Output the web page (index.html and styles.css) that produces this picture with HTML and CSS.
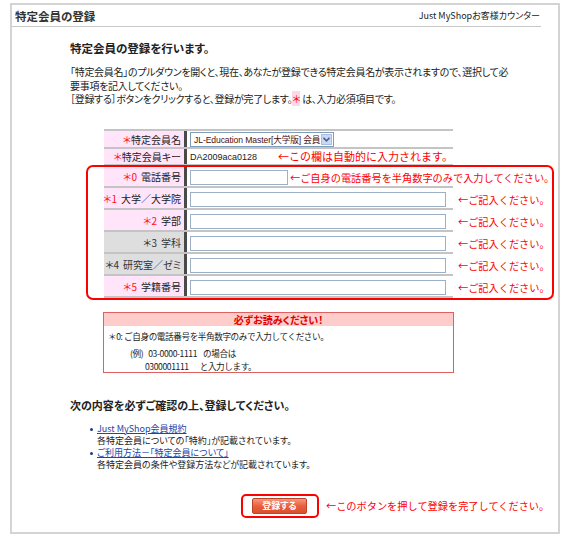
FILE: index.html
```html
<!DOCTYPE html>
<html lang="ja">
<head>
<meta charset="utf-8">
<title>特定会員の登録</title>
<link rel="stylesheet" href="styles.css">
</head>
<body>
<div class="frame">
  <div class="header">
    <h1 class="title">特定会員の登録</h1>
    <span class="counter">Just MyShopお客様カウンター</span>
  </div>
  <div class="content">
    <h2 class="lead">特定会員の登録を行います。</h2>
    <p class="intro">「特定会員名」のプルダウンを開くと、現在、あなたが登録できる特定会員名が表示されますので、選択して必<br>要事項を記入してください。<br>［登録する］ボタンをクリックすると、登録が完了します。<span class="req-mark">＊</span> は、入力必須項目です。</p>

    <div class="tablewrap">
      <div class="ftable">
        <div class="frow r1">
          <div class="lab"><span><span class="red">＊</span>特定会員名</span></div>
          <div class="val">
            <div class="select"><span class="seltext">JL-Education Master[大学版] 会員</span><span class="arrow"><svg width="7" height="5" viewBox="0 0 7 5"><path d="M0.5 0.8 L3.5 3.8 L6.5 0.8" fill="none" stroke="#4d6185" stroke-width="1.6"/></svg></span></div>
          </div>
        </div>
        <div class="frow r2">
          <div class="lab"><span><span class="red">＊</span>特定会員キー</span></div>
          <div class="val"><span class="key">DA2009aca0128</span><span class="note note-lg">←この欄は自動的に入力されます。</span></div>
        </div>
        <div class="frow rn">
          <div class="lab"><span><span class="red num-mark">＊0</span>電話番号</span></div>
          <div class="val"><input class="inp inp-s" type="text"><span class="note note-tel">←ご自身の電話番号を半角数字のみで入力してください。</span></div>
        </div>
        <div class="frow rn">
          <div class="lab"><span><span class="red num-mark">＊1</span>大学／大学院</span></div>
          <div class="val"><input class="inp" type="text"><span class="note">←ご記入ください。</span></div>
        </div>
        <div class="frow rn">
          <div class="lab"><span><span class="red num-mark">＊2</span>学部</span></div>
          <div class="val"><input class="inp" type="text"><span class="note">←ご記入ください。</span></div>
        </div>
        <div class="frow rn">
          <div class="lab gray"><span><span class="num-mark">＊3</span>学科</span></div>
          <div class="val"><input class="inp" type="text"><span class="note">←ご記入ください。</span></div>
        </div>
        <div class="frow rn">
          <div class="lab gray"><span><span class="num-mark">＊4</span>研究室／ゼミ</span></div>
          <div class="val"><input class="inp" type="text"><span class="note">←ご記入ください。</span></div>
        </div>
        <div class="frow rn">
          <div class="lab"><span><span class="red num-mark">＊5</span>学籍番号</span></div>
          <div class="val"><input class="inp" type="text"><span class="note">←ご記入ください。</span></div>
        </div>
      </div>
      <div class="redbox"></div>
    </div>

    <div class="notice">
      <div class="notice-head">必ずお読みください！</div>
      <div class="notice-body">
        <div class="nline">＊0: ご自身の電話番号を半角数字のみで入力してください。</div>
        <div class="nline ex1"><span class="exl">(例)</span><span class="num">03-0000-1111</span><span>の場合は</span></div>
        <div class="nline ex2"><span class="num2">0300001111</span><span>と入力します。</span></div>
      </div>
    </div>

    <h3 class="confirm">次の内容を必ずご確認の上、登録してください。</h3>
    <ul class="links">
      <li><a href="#">Just MyShop会員規約</a><br>各特定会員についての「特約」が記載されています。</li>
      <li><a href="#">ご利用方法－「特定会員について」</a><br>各特定会員の条件や登録方法などが記載されています。</li>
    </ul>

    <div class="submit-row">
      <div class="btnframe"><button class="btn" type="button">登録する</button></div>
      <span class="btn-note">←このボタンを押して登録を完了してください。</span>
    </div>
  </div>
</div>
</body>
</html>
```
FILE: styles.css
```css
html, body {
  margin: 0;
  padding: 0;
  background: #fff;
}
body {
  font-family: "Noto Sans CJK JP", "Noto Sans", sans-serif;
  font-size: 10px;
  color: #222;
}
.frame {
  margin: 3px 0 0 10px;
  width: 546px;
  height: 527px;
  border: 2px solid #d4d4d4;
}
.header {
  width: 526px;
  height: 21px;
  padding-left: 3px;
  border-bottom: 1px solid #c8c8c8;
  display: flex;
  align-items: center;
  justify-content: space-between;
}
.title {
  margin: 0;
  font-size: 11.5px;
  font-weight: bold;
  color: #333;
  font-feature-settings: "palt";
  line-height: 16px;
}
.counter {
  font-size: 9px;
  color: #222;
  font-feature-settings: "palt";
  padding-right: 1px;
}
.content {
  padding-left: 58px;
}
.lead {
  margin: 13px 0 0 0;
  font-size: 11.5px;
  line-height: 16px;
  font-weight: bold;
  font-feature-settings: "palt";
}
.intro {
  margin: 9px 0 0 0;
  font-size: 10px;
  line-height: 13.5px;
  font-feature-settings: "palt";
  letter-spacing: -0.3px;
  white-space: nowrap;
}
.req-mark {
  color: #ff0000;
  background: #ffd8e8;
}
.tablewrap {
  position: relative;
  margin: 23.5px 0 0 34px;
  width: 349px;
}
.ftable {
  width: 349px;
  border-top: 2px solid #c4c4c4;
}
.frow {
  display: flex;
  border-bottom: 2px solid #c4c4c4;
}
.r1 { height: 16px; }
.r2 { height: 15px; }
.rn { height: 20px; }
.lab {
  width: 77px;
  padding-right: 3px;
  background: #ffe4fa;
  border-right: 3px solid #4a4a4a;
  display: flex;
  align-items: center;
  justify-content: flex-end;
  font-size: 10px;
  white-space: nowrap;
  font-feature-settings: "palt";
  color: #222;
}
.lab.gray {
  background: #dedede;
  color: #333;
}
.red { color: #ff1010; }
.num-mark {
  margin-right: 4px;
}
.val {
  width: 263px;
  padding-left: 3px;
  display: flex;
  align-items: center;
  white-space: nowrap;
}
.rn .val {
  align-items: flex-end;
  padding-bottom: 1px;
  box-sizing: border-box;
  height: 20px;
}
.select {
  width: 144px;
  height: 15px;
  box-sizing: border-box;
  border: 1px solid #7f9db9;
  display: flex;
  align-items: center;
  justify-content: space-between;
  background: #fff;
}
.seltext {
  font-family: "Liberation Sans", "Noto Sans CJK JP", sans-serif;
  font-size: 8.6px;
  color: #4a1010;
  padding-left: 3px;
  letter-spacing: -0.1px;
}
.arrow {
  width: 11px;
  height: 11px;
  margin-right: 1px;
  background: #c9d8f5;
  border: 1px solid #a8bde6;
  box-sizing: border-box;
  display: flex;
  align-items: center;
  justify-content: center;
}
.key {
  display: inline-block;
  width: 93px;
  font-family: "Liberation Sans", sans-serif;
  font-size: 9px;
  color: #222;
}
.note {
  color: #ff0000;
  font-size: 10.2px;
  line-height: 15px;
  margin-left: 12px;
}
.note-lg {
  font-size: 11px;
  margin-left: 0;
}
.note-tel {
  margin-left: 2px;
}
.inp {
  width: 256px;
  height: 15px;
  box-sizing: border-box;
  margin: 0;
  padding: 0;
  border: 1px solid #9cb0c6;
  background: #fff;
  flex: none;
}
.inp-s {
  width: 98px;
}
.redbox {
  position: absolute;
  left: -18px;
  top: 36px;
  width: 468px;
  height: 135px;
  box-sizing: border-box;
  border: 2px solid #ff0000;
  border-radius: 7px;
  pointer-events: none;
}
.notice {
  margin: 14px 0 0 33px;
  width: 349px;
  border: 1px solid #e06060;
}
.notice-head {
  height: 13px;
  line-height: 13px;
  background: #ffcccc;
  color: #e00000;
  font-weight: bold;
  text-align: center;
  font-size: 10px;
  font-feature-settings: "palt";
}
.notice-body {
  padding: 5px 0 0 4px;
  font-size: 8.6px;
  letter-spacing: -0.4px;
  color: #222;
}
.nline {
  line-height: 11px;
  white-space: nowrap;
}
.ex1 {
  margin-top: 6px;
  padding-left: 22px;
}
.ex2 {
  margin-top: 1.5px;
  padding-left: 37px;
}
.exl {
  margin-right: 5px;
}
.num {
  margin-right: 6px;
}
.num2 {
  margin-right: 11px;
}
.confirm {
  margin: 24px 0 0 0;
  font-size: 11px;
  line-height: 16px;
  font-weight: bold;
  font-feature-settings: "palt";
}
.links {
  margin: 10px 0 0 0;
  padding: 0 0 0 27px;
  list-style: none;
  font-size: 9px;
  line-height: 12.3px;
  font-feature-settings: "palt";
}
.links li {
  position: relative;
}
.links li::before {
  content: "";
  position: absolute;
  left: -7px;
  top: 5px;
  width: 3px;
  height: 3px;
  border-radius: 50%;
  background: #1a3c8c;
}
.links a {
  color: #2244aa;
  text-decoration: underline;
}
.submit-row {
  margin: 22px 0 0 171px;
  display: flex;
  align-items: center;
}
.btnframe {
  width: 78px;
  height: 24px;
  box-sizing: border-box;
  border: 2px solid #ff0000;
  border-radius: 5px;
  padding: 2px 0 0 9px;
}
.btn {
  display: block;
  width: 55px;
  height: 16px;
  margin: 0;
  padding: 0;
  border: 1px solid #b8442a;
  border-radius: 2px;
  background: linear-gradient(#f8967a, #e8603e 50%, #dc4e2c);
  color: #fff;
  font-family: "Noto Sans CJK JP", sans-serif;
  font-weight: bold;
  font-size: 9px;
  line-height: 14px;
  font-feature-settings: "palt";
}
.btn-note {
  margin-left: 7px;
  color: #ff0000;
  font-size: 10.2px;
}
```
